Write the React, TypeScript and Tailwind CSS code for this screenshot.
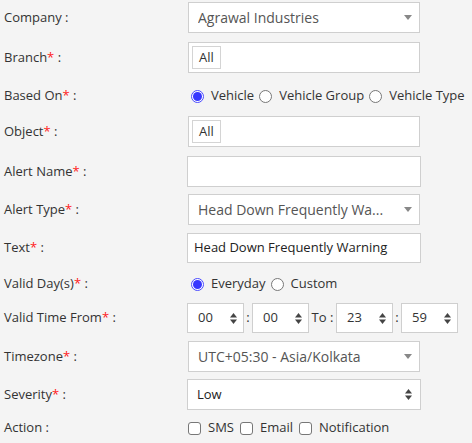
import React from "react";

const font = { fontFamily: '"Open Sans", "Noto Sans", sans-serif' };

function Label({ text, req = false }: { text: string; req?: boolean }) {
  return (
    <div className="w-[187px] shrink-0 pl-[4px] text-[13px] text-[#333]">
      {text}
      {req && <span className="text-[#ff1a1a]">*</span>} :
    </div>
  );
}

function Caret() {
  return (
    <svg width="8" height="5" viewBox="0 0 8 5" className="shrink-0">
      <path d="M0 0 L8 0 L4 5 Z" fill="#888" />
    </svg>
  );
}

function UpDown() {
  return (
    <svg width="7" height="13" viewBox="0 0 7 13" className="shrink-0">
      <path d="M0 5.5 L7 5.5 L3.5 1 Z" fill="#444" />
      <path d="M0 7.5 L7 7.5 L3.5 12 Z" fill="#444" />
    </svg>
  );
}

function Radio({ on = false, label }: { on?: boolean; label: string }) {
  return (
    <div className="flex items-center gap-[7px]">
      {on ? (
        <span className="w-[13px] h-[13px] rounded-full border border-[#4a4aff] bg-white flex items-center justify-center">
          <span className="w-[9px] h-[9px] rounded-full bg-[#3737ff]" />
        </span>
      ) : (
        <span className="w-[13px] h-[13px] rounded-full border border-[#777] bg-white" />
      )}
      <span>{label}</span>
    </div>
  );
}

function Check({ label }: { label: string }) {
  return (
    <div className="flex items-center gap-[7px]">
      <span className="w-[13px] h-[13px] rounded-[3px] border border-[#777] bg-white" />
      <span>{label}</span>
    </div>
  );
}

function Select({ value }: { value: string }) {
  return (
    <div className="ml-[1px] w-[232px] h-[31px] border border-[#cfcfcf] bg-white flex items-center pl-[9px] pr-[7px] text-[14px] text-[#555]">
      <span className="flex-1 truncate">{value}</span>
      <Caret />
    </div>
  );
}

function Tagged() {
  return (
    <div className="ml-[1px] w-[232px] h-[31px] border border-[#cfcfcf] bg-white flex items-center pl-[3px]">
      <span className="h-[23px] px-[6px] border border-[#d4d4d4] flex items-center text-[#333]">All</span>
    </div>
  );
}

function Time({ v }: { v: string }) {
  return (
    <div className="w-[57px] h-[30px] border border-[#cfcfcf] bg-white flex items-center pl-[10px] pr-[6px] text-[#333]">
      <span className="flex-1">{v}</span>
      <UpDown />
    </div>
  );
}

export default function App() {
  return (
    <div className="w-[472px] h-[443px] bg-[#f4f4f4] text-[13px] text-[#333] overflow-hidden" style={font}>
      <div className="flex items-center mt-[2px] h-[31px]">
        <Label text="Company" />
        <Select value="Agrawal Industries" />
      </div>
      <div className="flex items-center mt-[9px] h-[31px]">
        <Label text="Branch" req />
        <Tagged />
      </div>
      <div className="flex items-center mt-[11px] h-[24px]">
        <Label text="Based On" req />
        <div className="flex items-center gap-[5px] pl-[4px]">
          <Radio on label="Vehicle" />
          <Radio label="Vehicle Group" />
          <Radio label="Vehicle Type" />
        </div>
      </div>
      <div className="flex items-center mt-[8px] h-[31px]">
        <Label text="Object" req />
        <Tagged />
      </div>
      <div className="flex items-center mt-[9px] h-[31px]">
        <Label text="Alert Name" req />
        <div className="w-[234px] h-[31px] border border-[#cfcfcf] bg-white" />
      </div>
      <div className="flex items-center mt-[7px] h-[31px]">
        <Label text="Alert Type" req />
        <Select value="Head Down Frequently Wa..." />
      </div>
      <div className="flex items-center mt-[8px] h-[30px]">
        <Label text="Text" req />
        <div className="w-[234px] h-[30px] border border-[#cfcfcf] bg-white flex items-center pl-[6px] text-[#222]">
          Head Down Frequently Warning
        </div>
      </div>
      <div className="flex items-center mt-[9px] h-[24px]">
        <Label text="Valid Day(s)" req />
        <div className="flex items-center gap-[5px] pl-[4px]">
          <Radio on label="Everyday" />
          <Radio label="Custom" />
        </div>
      </div>
      <div className="flex items-center mt-[7px] h-[30px]">
        <Label text="Valid Time From" req />
        <Time v="00" />
        <span className="w-[8px] text-center">:</span>
        <Time v="00" />
        <span className="w-[27px] text-center">To :</span>
        <Time v="23" />
        <span className="w-[8px] text-center">:</span>
        <Time v="59" />
      </div>
      <div className="flex items-center mt-[8px] h-[31px]">
        <Label text="Timezone" req />
        <Select value="UTC+05:30 - Asia/Kolkata" />
      </div>
      <div className="flex items-center mt-[7px] h-[31px]">
        <Label text="Severity" req />
        <div className="w-[234px] h-[31px] border border-[#cfcfcf] bg-white flex items-center pl-[9px] pr-[8px] text-[#222]">
          <span className="flex-1">Low</span>
          <UpDown />
        </div>
      </div>
      <div className="flex items-center mt-[6px] h-[24px]">
        <Label text="Action" />
        <div className="flex items-center gap-[6px] pl-[1px]">
          <Check label="SMS" />
          <Check label="Email" />
          <Check label="Notification" />
        </div>
      </div>
    </div>
  );
}
